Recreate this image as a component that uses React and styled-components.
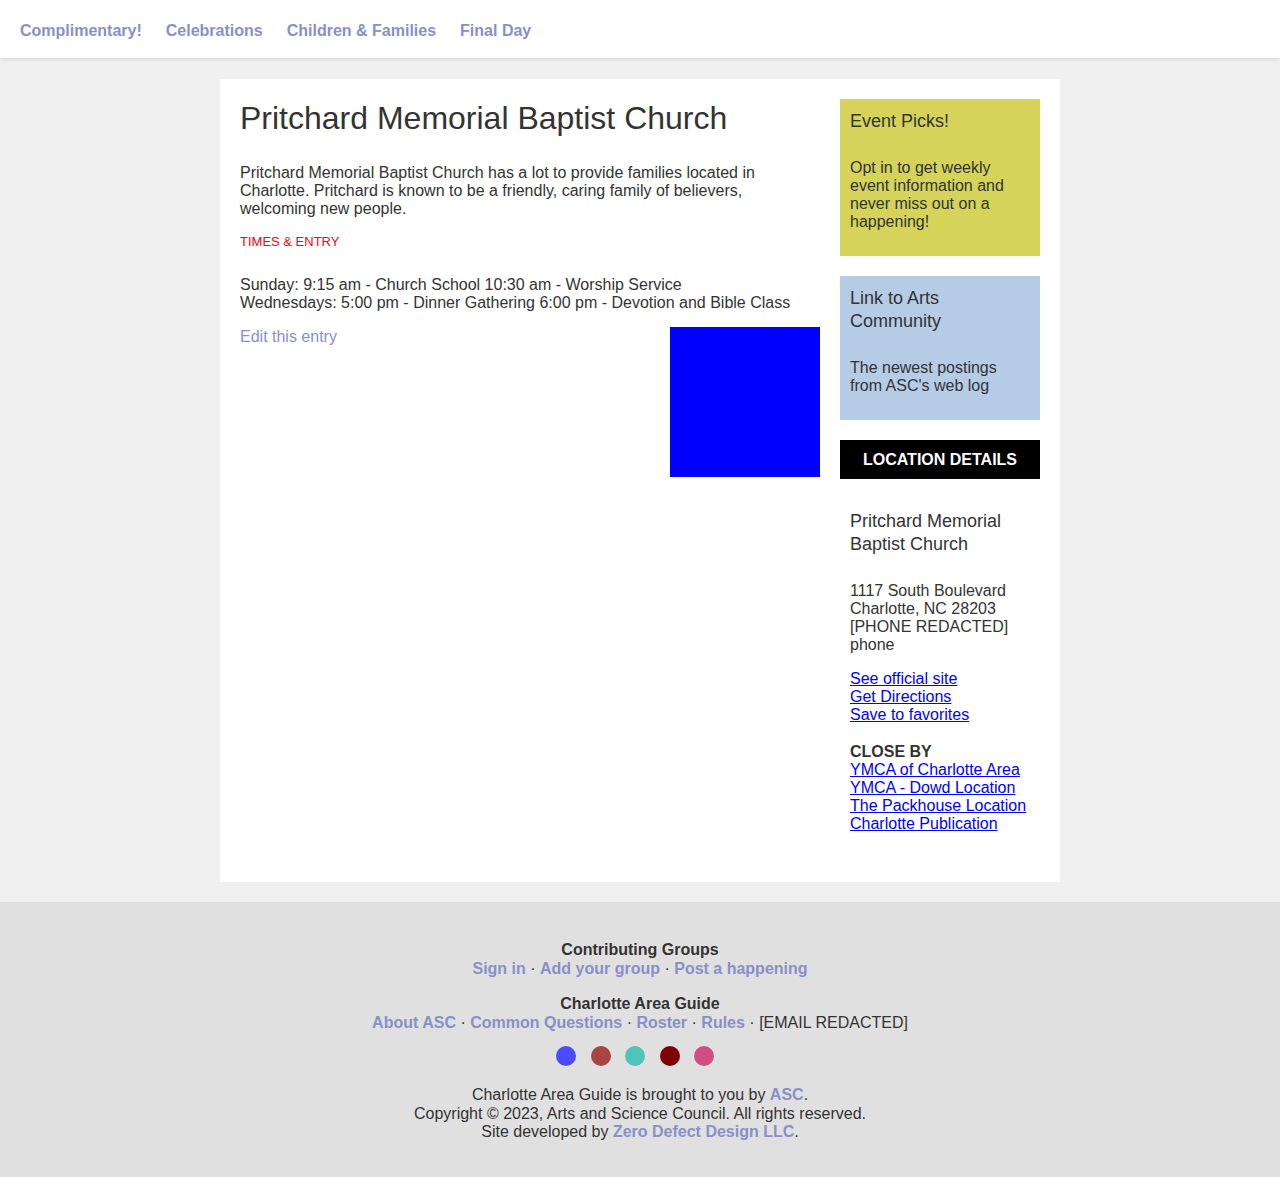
import React from 'react';
import styled, { createGlobalStyle } from 'styled-components';

const Global = createGlobalStyle`
  html, body {
    margin: 0;
    padding: 0;
    background: #f0f0f0;
    font-family: "Liberation Sans", Arial, Helvetica, sans-serif;
    color: #333;
    font-size: 16px;
  }
`;

const linkColor = '#8a8fc8';

const Header = styled.header`
  height: 58px;
  box-sizing: border-box;
  padding: 3px 20px 0;
  background: #fff;
  box-shadow: 0 1px 4px rgba(0, 0, 0, 0.12);
  display: flex;
  align-items: center;
  gap: 24px;
  position: relative;
`;

const NavLink = styled.a`
  color: ${linkColor};
  font-weight: bold;
  font-size: 16px;
  text-decoration: none;
  cursor: pointer;
`;

const Page = styled.div`
  padding: 21px 0 20px;
`;

const Container = styled.div`
  width: 800px;
  margin: 0 auto;
  background: #fff;
  padding: 20px 20px 49px;
  display: flex;
  gap: 20px;
  align-items: flex-start;
`;

const Main = styled.main`
  flex: 1;
  padding-top: 1px;
  line-height: 18px;
`;

const Title = styled.h1`
  font-size: 32px;
  font-weight: normal;
  line-height: 37px;
  margin: 0 0 27px;
  color: #333;
`;

const Para = styled.p`
  margin: 0 0 16px;
`;

const Label = styled.div`
  color: #f00;
  font-size: 13px;
  line-height: 16px;
  margin-bottom: 26px;
`;

const Photo = styled.div`
  float: right;
  width: 150px;
  height: 150px;
  margin-top: -1px;
  background: #0000ff;
`;

const EditLink = styled.a`
  color: ${linkColor};
  text-decoration: none;
`;

const Sidebar = styled.aside`
  width: 200px;
  display: flex;
  flex-direction: column;
  gap: 20px;
`;

const Promo = styled.div`
  background: ${p => p.$bg};
  padding: 11px 10px 25px;
`;

const PromoTitle = styled.h3`
  font-size: 18px;
  font-weight: normal;
  line-height: 23px;
  margin: 0 0 26px;
`;

const PromoText = styled.p`
  margin: 0;
  line-height: 18px;
`;

const Location = styled.div``;

const LocationHead = styled.div`
  background: #000;
  color: #fff;
  font-weight: bold;
  text-align: center;
  height: 39px;
  line-height: 40px;
`;

const LocationBody = styled.div`
  padding: 31px 10px 0;
  line-height: 18px;
`;

const LocName = styled.h3`
  font-size: 18px;
  font-weight: normal;
  line-height: 23px;
  margin: 0 0 26px;
`;

const Block = styled.div`
  margin-bottom: ${p => p.$mb || 0}px;
`;

const BlueLink = styled.a`
  display: block;
  color: #0000ff;
  text-decoration: underline;
`;

const Strong = styled.div`
  font-weight: bold;
`;

const Footer = styled.footer`
  background: #e0e0e0;
  padding: 38px 0 36px;
  text-align: center;
  line-height: 19px;
`;

const FooterGroup = styled.div`
  margin-bottom: ${p => p.$mb || 0}px;
  line-height: ${p => p.$lh || 19}px;
`;

const FLink = styled.a`
  color: ${linkColor};
  font-weight: bold;
  text-decoration: none;
`;

const Dots = styled.div`
  display: flex;
  justify-content: center;
  gap: 14.5px;
  padding-right: 10px;
  margin-bottom: 20px;
`;

const Dot = styled.span`
  width: 20px;
  height: 20px;
  border-radius: 50%;
  background: ${p => p.$c};
`;

const dots = ['#4b4bff', '#a84444', '#4fc4b8', '#800000', '#d24f86'];

export default function App() {
  return (
    <>
      <Global />
      <Header>
        <NavLink>Complimentary!</NavLink>
        <NavLink>Celebrations</NavLink>
        <NavLink>Children &amp; Families</NavLink>
        <NavLink>Final Day</NavLink>
      </Header>
      <Page>
        <Container>
          <Main>
            <Title>Pritchard Memorial Baptist Church</Title>
            <Para>
              Pritchard Memorial Baptist Church has a lot to provide families located in
              Charlotte. Pritchard is known to be a friendly, caring family of believers,
              welcoming new people.
            </Para>
            <Label>TIMES &amp; ENTRY</Label>
            <Para>
              Sunday: 9:15 am - Church School 10:30 am - Worship Service<br />
              Wednesdays: 5:00 pm - Dinner Gathering 6:00 pm - Devotion and Bible Class
            </Para>
            <Photo />
            <EditLink>Edit this entry</EditLink>
          </Main>
          <Sidebar>
            <Promo $bg="#d5d35a">
              <PromoTitle>Event Picks!</PromoTitle>
              <PromoText>
                Opt in to get weekly event information and never miss out on a happening!
              </PromoText>
            </Promo>
            <Promo $bg="#b5cbe6">
              <PromoTitle>Link to Arts Community</PromoTitle>
              <PromoText>The newest postings from ASC's web log</PromoText>
            </Promo>
            <Location>
              <LocationHead>LOCATION DETAILS</LocationHead>
              <LocationBody>
                <LocName>Pritchard Memorial Baptist Church</LocName>
                <Block $mb={16}>
                  1117 South Boulevard<br />
                  Charlotte, NC 28203<br />
                  [PHONE REDACTED]<br />
                  phone
                </Block>
                <Block $mb={19}>
                  <BlueLink>See official site</BlueLink>
                  <BlueLink>Get Directions</BlueLink>
                  <BlueLink>Save to favorites</BlueLink>
                </Block>
                <Block>
                  <Strong>CLOSE BY</Strong>
                  <BlueLink>YMCA of Charlotte Area</BlueLink>
                  <BlueLink>YMCA - Dowd Location</BlueLink>
                  <BlueLink>The Packhouse Location</BlueLink>
                  <BlueLink>Charlotte Publication</BlueLink>
                </Block>
              </LocationBody>
            </Location>
          </Sidebar>
        </Container>
      </Page>
      <Footer>
        <FooterGroup $mb={16}>
          <Strong>Contributing Groups</Strong>
          <FLink>Sign in</FLink> · <FLink>Add your group</FLink> · <FLink>Post a happening</FLink>
        </FooterGroup>
        <FooterGroup $mb={14}>
          <Strong>Charlotte Area Guide</Strong>
          <FLink>About ASC</FLink> · <FLink>Common Questions</FLink> · <FLink>Roster</FLink> ·{' '}
          <FLink>Rules</FLink> · [EMAIL REDACTED]
        </FooterGroup>
        <Dots>
          {dots.map(c => <Dot key={c} $c={c} />)}
        </Dots>
        <FooterGroup $lh={18.5}>
          Charlotte Area Guide is brought to you by <FLink>ASC</FLink>.<br />
          Copyright © 2023, Arts and Science Council. All rights reserved.<br />
          Site developed by <FLink>Zero Defect Design LLC</FLink>.
        </FooterGroup>
      </Footer>
    </>
  );
}
